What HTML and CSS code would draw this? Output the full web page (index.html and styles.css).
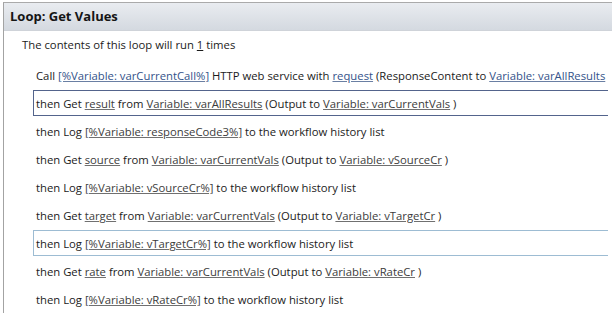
FILE: index.html
```html
<!DOCTYPE html>
<html>
<head>
<meta charset="utf-8">
<link rel="stylesheet" href="styles.css">
</head>
<body>
<div class="loop">
  <div class="header">Loop: Get Values</div>
  <div class="content">
    <div class="intro">The contents of this loop will run <span class="num">1</span> times</div>
    <div class="rows">
      <div class="row">Call <span class="lnk blue">[%Variable: varCurrentCall%]</span> HTTP web service with <span class="lnk blue">request</span> (ResponseContent to <span class="lnk blue">Variable: varAllResults</span></div>
      <div class="row sel-dark">then Get <span class="lnk">result</span> from <span class="lnk">Variable: varAllResults</span> (Output to <span class="lnk">Variable: varCurrentVals</span> )</div>
      <div class="row">then Log <span class="lnk">[%Variable: responseCode3%]</span> to the workflow history list</div>
      <div class="row">then Get <span class="lnk">source</span> from <span class="lnk">Variable: varCurrentVals</span> (Output to <span class="lnk">Variable: vSourceCr</span> )</div>
      <div class="row">then Log <span class="lnk">[%Variable: vSourceCr%]</span> to the workflow history list</div>
      <div class="row">then Get <span class="lnk">target</span> from <span class="lnk">Variable: varCurrentVals</span> (Output to <span class="lnk">Variable: vTargetCr</span> )</div>
      <div class="row sel-light">then Log <span class="lnk">[%Variable: vTargetCr%]</span> to the workflow history list</div>
      <div class="row">then Get <span class="lnk">rate</span> from <span class="lnk">Variable: varCurrentVals</span> (Output to <span class="lnk">Variable: vRateCr</span> )</div>
      <div class="row">then Log <span class="lnk">[%Variable: vRateCr%]</span> to the workflow history list</div>
    </div>
  </div>
</div>
</body>
</html>
```
FILE: styles.css
```css
html, body {
  margin: 0;
  padding: 0;
  background: #ffffff;
  width: 612px;
  height: 313px;
  overflow: hidden;
}
body {
  font-family: "Open Sans", "Noto Sans", sans-serif;
  font-size: 11.3px;
  color: #1b1b1b;
}
.loop {
  margin: 2px 0 0 3px;
  border-left: 1px solid #a3a3a3;
  border-top: 1px solid #aaaaaa;
  height: 320px;
}
.header {
  height: 27px;
  line-height: 27px;
  padding-left: 6px;
  font-weight: bold;
  font-size: 13px;
  color: #151515;
  background: linear-gradient(#e9ecf0, #d4d9e0);
  border-bottom: 1px solid #cfd3d9;
}
.content {
  padding-left: 18px;
}
.intro {
  height: 27px;
  line-height: 27px;
  margin-bottom: 4px;
}
.num {
  text-decoration: underline;
}
.rows {
  display: flex;
  flex-direction: column;
  gap: 2px;
  padding-left: 11px;
  padding-right: 4px;
}
.row {
  height: 26px;
  line-height: 25px;
  padding-left: 2px;
  border: 1px solid transparent;
  border-right: none;
  white-space: nowrap;
  overflow: hidden;
  box-sizing: border-box;
}
.lnk {
  color: #3c3c3c;
  text-decoration: underline;
  text-decoration-color: #707070;
}
.lnk.blue {
  color: #34538a;
  text-decoration-color: #6a7fa3;
}
.sel-dark {
  border-color: #53648c;
}
.sel-light {
  border-color: #9dbcd3;
}
```
